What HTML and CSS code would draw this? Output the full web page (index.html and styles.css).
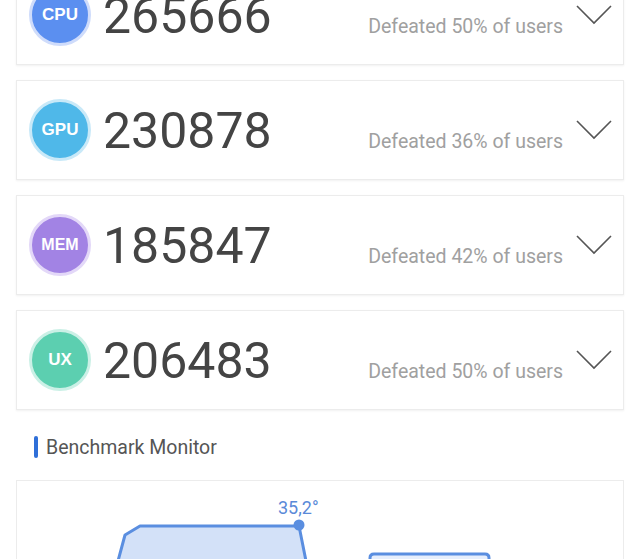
FILE: index.html
```html
<!DOCTYPE html>
<html>
<head>
<meta charset="utf-8">
<link rel="stylesheet" href="styles.css">
</head>
<body>
<div class="page">
  <div class="cards">
    <div class="card">
      <div class="badge cpu">CPU</div>
      <div class="score-row">
        <span class="score">265666</span>
        <span class="defeated">Defeated 50% of users</span>
      </div>
      <svg class="chev" width="36" height="20" viewBox="0 0 36 20"><polyline points="1,1 18,18 35,1" fill="none" stroke="#555" stroke-width="1.6"/></svg>
    </div>
    <div class="card">
      <div class="badge gpu">GPU</div>
      <div class="score-row">
        <span class="score">230878</span>
        <span class="defeated">Defeated 36% of users</span>
      </div>
      <svg class="chev" width="36" height="20" viewBox="0 0 36 20"><polyline points="1,1 18,18 35,1" fill="none" stroke="#555" stroke-width="1.6"/></svg>
    </div>
    <div class="card">
      <div class="badge mem">MEM</div>
      <div class="score-row">
        <span class="score">185847</span>
        <span class="defeated">Defeated 42% of users</span>
      </div>
      <svg class="chev" width="36" height="20" viewBox="0 0 36 20"><polyline points="1,1 18,18 35,1" fill="none" stroke="#555" stroke-width="1.6"/></svg>
    </div>
    <div class="card">
      <div class="badge ux">UX</div>
      <div class="score-row">
        <span class="score">206483</span>
        <span class="defeated">Defeated 50% of users</span>
      </div>
      <svg class="chev" width="36" height="20" viewBox="0 0 36 20"><polyline points="1,1 18,18 35,1" fill="none" stroke="#555" stroke-width="1.6"/></svg>
    </div>
  </div>
  <div class="section-title"><span class="bar"></span><span class="title-text">Benchmark Monitor</span></div>
  <div class="chart-card">
    <svg class="chart" width="606" height="78" viewBox="0 0 606 78">
      <path d="M101,80 L108,54 L123,45 L282,45 L289,80 Z" fill="#d3e1f8" stroke="#5a8ee0" stroke-width="3" stroke-linejoin="round"/>
      <circle cx="282" cy="44" r="5.5" fill="#5a8ee0"/>
      <text x="261" y="33" class="chart-label">35,2°</text>
      <path d="M353,100 L353,77 Q353,73 357,73 L468,73 Q472,73 472,77 L472,100 Z" fill="#e6eefc" stroke="#5a8ee0" stroke-width="3"/>
    </svg>
  </div>
</div>
</body>
</html>
```
FILE: styles.css
```css
html, body {
  margin: 0;
  padding: 0;
  background: #ffffff;
  overflow: hidden;
}
body {
  font-family: Roboto, "Liberation Sans", sans-serif;
  width: 640px;
  height: 560px;
}
.page {
  padding: 0 16px;
  margin-top: -35px;
}
.cards {
  display: flex;
  flex-direction: column;
  gap: 15px;
}
.card {
  height: 98px;
  border: 1px solid #ececec;
  box-shadow: 0 1px 2px rgba(0,0,0,0.06);
  background: #fff;
  display: flex;
  align-items: center;
  padding: 0 11px 0 12px;
}
.badge {
  width: 56px;
  height: 56px;
  border-radius: 50%;
  border: 3px solid;
  flex: none;
  display: flex;
  align-items: center;
  justify-content: center;
  color: #fff;
  font-family: "Liberation Sans", Arial, sans-serif;
  font-weight: bold;
  font-size: 17px;
}
.cpu { background: #5b8ff0; border-color: #cfdcfb; }
.gpu { background: #4fb8e9; border-color: #c9e9f8; }
.mem { background: #a283e4; border-color: #e3d8f8; font-size: 16px; }
.ux { background: #5ccfb0; border-color: #cbf0e6; }
.score-row {
  flex: 1;
  display: flex;
  align-items: baseline;
  margin-left: 12px;
  padding-top: 2px;
}
.score {
  font-size: 50px;
  color: #444;
  line-height: 1;
}
.defeated {
  margin-left: auto;
  font-size: 19.5px;
  color: #a0a0a0;
  margin-right: 13px;
}
.chev {
  flex: none;
  display: block;
  margin-top: -1px;
}
.section-title {
  display: flex;
  align-items: center;
  height: 24px;
  margin: 25px 0 0 18px;
}
.bar {
  width: 4px;
  height: 22px;
  border-radius: 2px;
  background: #2f6fd8;
}
.title-text {
  margin-left: 8px;
  font-size: 19.5px;
  color: #555;
}
.chart-card {
  margin-top: 21px;
  height: 78px;
  border: 1px solid #ececec;
  border-bottom: none;
  background: #fff;
}
.chart {
  display: block;
}
.chart-label {
  font-family: Roboto, "Liberation Sans", sans-serif;
  font-size: 18px;
  fill: #5a8ad8;
}
```
